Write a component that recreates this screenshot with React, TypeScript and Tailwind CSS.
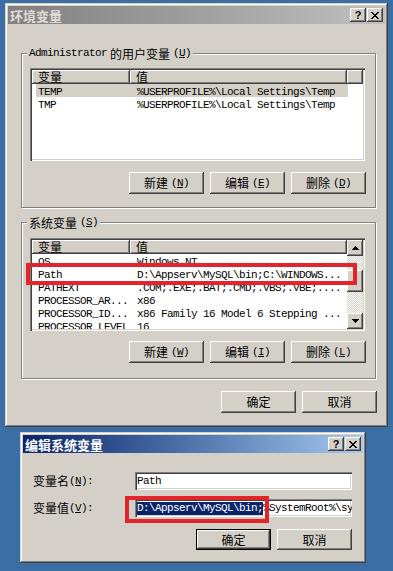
import React from "react";

// classic win2k look
const face = "bg-[#d4d0c8]";
const raised =
  "shadow-[inset_-1px_-1px_#404040,inset_1px_1px_#ffffff,inset_-2px_-2px_#808080,inset_2px_2px_#d4d0c8]";
const sunken =
  "shadow-[inset_1px_1px_#808080,inset_2px_2px_#404040,inset_-1px_-1px_#ffffff,inset_-2px_-2px_#d4d0c8]";
const frame =
  "shadow-[inset_-1px_-1px_#404040,inset_1px_1px_#d4d0c8,inset_-2px_-2px_#808080,inset_2px_2px_#ffffff]";

const A = ({ children }: { children: React.ReactNode }) => (
  <span className="font-['Liberation_Mono',monospace] text-[11px] tracking-[-0.6px]">{children}</span>
);

const Key = ({ k }: { k: string }) => (
  <A>
    (<span className="underline underline-offset-1">{k}</span>)
  </A>
);

const TitleBtns = () => (
  <div className="flex items-center gap-[1px]">
    <div className={`w-[16px] h-[14px] ${face} ${raised} flex items-center justify-center`}>
      <span className="font-['Liberation_Sans',sans-serif] font-bold text-[11px] text-black leading-none">?</span>
    </div>
    <div className={`w-[16px] h-[14px] ${face} ${raised} flex items-center justify-center`}>
      <svg width="8" height="7" viewBox="0 0 8 7" shapeRendering="crispEdges">
        <path
          d="M0 0h2v1H0zM6 0h2v1H6zM1 1h2v1H1zM5 1h2v1H5zM2 2h4v1H2zM3 3h2v1H3zM2 4h4v1H2zM1 5h2v1H1zM5 5h2v1H5zM0 6h2v1H0zM6 6h2v1H6z"
          fill="#000"
        />
      </svg>
    </div>
  </div>
);

const Btn = ({ children, def }: { children: React.ReactNode; def?: boolean }) => (
  <div
    className={`w-[75px] h-full ${face} ${raised} flex items-center justify-center gap-[3px] ${
      def ? "border border-black" : ""
    }`}
  >
    {children}
  </div>
);

function Group({
  label,
  className,
  children,
}: {
  label: React.ReactNode;
  className: string;
  children: React.ReactNode;
}) {
  return (
    <div
      className={`relative ml-[13px] w-[355px] border border-[#808080] shadow-[inset_1px_1px_#ffffff,1px_1px_#ffffff] ${className}`}
    >
      <div className="absolute left-[5px] -top-[8px] h-[15px] px-[2px] bg-[#d4d0c8] flex items-center gap-[3px] whitespace-nowrap">
        {label}
      </div>
      {children}
    </div>
  );
}

const Head = ({ w, children }: { w: string; children?: React.ReactNode }) => (
  <div className={`${w} h-[14px] ${face} ${raised} pl-[6px] flex items-center`}>
    {children && <span className="text-[12px] leading-[12px]">{children}</span>}
  </div>
);

const Row = ({ name, value, sel }: { name: string; value: string; sel?: boolean }) => (
  <div className={`ml-[4px] w-[312px] h-[13px] flex items-center whitespace-nowrap ${sel ? "bg-[#d4d0c8]" : ""}`}>
    <div className="w-[99px] pl-[2px] overflow-hidden">
      <A>{name}</A>
    </div>
    <div className="pl-[2px]">
      <A>{value}</A>
    </div>
  </div>
);

const Arrow = ({ down }: { down?: boolean }) => (
  <svg width="7" height="4" viewBox="0 0 7 4" shapeRendering="crispEdges">
    <path
      d={down ? "M0 0h7v1H0zM1 1h5v1H1zM2 2h3v1H2zM3 3h1v1H3z" : "M3 0h1v1H3zM2 1h3v1H2zM1 2h5v1H1zM0 3h7v1H0z"}
      fill="#000"
    />
  </svg>
);

const sysVars = [
  { name: "OS", value: "Windows_NT" },
  { name: "Path", value: "D:\\Appserv\\MySQL\\bin;C:\\WINDOWS..." },
  { name: "PATHEXT", value: ".COM;.EXE;.BAT;.CMD;.VBS;.VBE;...." },
  { name: "PROCESSOR_AR...", value: "x86" },
  { name: "PROCESSOR_ID...", value: "x86 Family 16 Model 6 Stepping ..." },
  { name: "PROCESSOR_LEVEL", value: "16" },
];

export default function App() {
  return (
    <div className="w-[393px] h-[571px] overflow-hidden bg-[#3a6ea5] flex flex-col font-['Noto_Sans_CJK_SC',sans-serif] text-[12px] text-black leading-none select-none">
      {/* 环境变量 */}
      <div className={`ml-[5px] mt-[3px] w-[383px] h-[424px] shrink-0 p-[3px] ${face} ${frame} flex flex-col`}>
        <div className="h-[18px] flex items-center justify-between pl-[2px] pr-[2px] bg-linear-to-r from-[#808080] to-[#c0c0c0]">
          <span className="font-bold text-[13px] text-[#e0ddd6]">环境变量</span>
          <TitleBtns />
        </div>

        <Group
          className="mt-[29px] h-[155px]"
          label={
            <>
              <A>Administrator</A>
              <span>的用户变量</span>
              <Key k="U" />
            </>
          }
        >
          <div className="pt-[14px] pl-[8px] pr-[9px] flex flex-col">
            <div className={`w-[335px] h-[93px] bg-white p-[2px] ${sunken} flex flex-col`}>
              <div className="flex h-[14px] shrink-0">
                <Head w="w-[98px]">变量</Head>
                <Head w="w-[217px]">值</Head>
                <Head w="flex-1" />
              </div>
              <Row name="TEMP" value="%USERPROFILE%\Local Settings\Temp" sel />
              <Row name="TMP" value="%USERPROFILE%\Local Settings\Temp" />
            </div>
            <div className="mt-[11px] h-[22px] flex justify-end gap-[6px]">
              <Btn>
                <span>新建</span>
                <Key k="N" />
              </Btn>
              <Btn>
                <span>编辑</span>
                <Key k="E" />
              </Btn>
              <Btn>
                <span>删除</span>
                <Key k="D" />
              </Btn>
            </div>
          </div>
        </Group>

        <Group
          className="mt-[14px] h-[157px]"
          label={
            <>
              <span>系统变量</span>
              <Key k="S" />
            </>
          }
        >
          <div className="pt-[15px] pl-[8px] pr-[9px] flex flex-col">
            <div className="relative">
              <div className={`w-[335px] h-[93px] bg-white p-[2px] ${sunken} flex`}>
                <div className="w-[315px] h-full flex flex-col">
                  <div className="flex h-[14px] shrink-0">
                    <Head w="w-[98px]">变量</Head>
                    <Head w="w-[217px]">值</Head>
                  </div>
                  <div className="flex-1 overflow-hidden">
                    {sysVars.map((v) => (
                      <Row key={v.name} name={v.name} value={v.value} />
                    ))}
                  </div>
                </div>
                <div className="w-[16px] h-full flex flex-col">
                  <div className={`h-[16px] ${face} ${raised} flex items-center justify-center`}>
                    <Arrow />
                  </div>
                  <div className="flex-1 pt-[14px] bg-[image:repeating-conic-gradient(#ffffff_0_25%,#d4d0c8_0_50%)] bg-[length:2px_2px]">
                    <div className={`h-[22px] ${face} ${raised}`} />
                  </div>
                  <div className={`h-[16px] ${face} ${raised} flex items-center justify-center`}>
                    <Arrow down />
                  </div>
                </div>
              </div>
              <div className="absolute -left-[4px] top-[25px] w-[331px] h-[22px] border-4 border-[#e3242b] pointer-events-none" />
            </div>
            <div className="mt-[10px] h-[22px] flex justify-end gap-[6px]">
              <Btn>
                <span>新建</span>
                <Key k="W" />
              </Btn>
              <Btn>
                <span>编辑</span>
                <Key k="I" />
              </Btn>
              <Btn>
                <span>删除</span>
                <Key k="L" />
              </Btn>
            </div>
          </div>
        </Group>

        <div className="mt-[12px] h-[22px] pr-[8px] flex justify-end gap-[6px]">
          <Btn>确定</Btn>
          <Btn>取消</Btn>
        </div>
      </div>

      {/* 编辑系统变量 */}
      <div className={`ml-[20px] mt-[5px] w-[346px] h-[131px] shrink-0 p-[3px] ${face} ${frame} flex flex-col`}>
        <div className="h-[18px] flex items-center justify-between pl-[2px] pr-[2px] bg-linear-to-r from-[#0a246a] to-[#a6caf0]">
          <span className="font-bold text-[13px] text-white">编辑系统变量</span>
          <TitleBtns />
        </div>
        <div className="pt-[19px] pl-[10px] pr-[11px] flex flex-col">
          <div className="h-[18px] flex items-center">
            <div className="w-[102px] flex items-center">
              <span>变量名</span>
              <Key k="N" />
              <A>:</A>
            </div>
            <div className={`w-[217px] h-full bg-white ${sunken} pl-[2px] flex items-center overflow-hidden whitespace-nowrap`}>
              <A>Path</A>
            </div>
          </div>
          <div className="mt-[9px] h-[18px] flex items-center">
            <div className="w-[102px] flex items-center">
              <span>变量值</span>
              <Key k="V" />
              <A>:</A>
            </div>
            <div className="relative w-[217px] h-full">
              <div className={`w-full h-full bg-white ${sunken} pl-[2px] flex items-center overflow-hidden whitespace-nowrap`}>
                <span className="h-[13px] inline-flex items-center bg-[#0a246a] text-white">
                  <A>D:\Appserv\MySQL\bin;</A>
                </span>
                <A>%SystemRoot%\system32;%SystemRoot%</A>
              </div>
              <div className="absolute -left-[10px] -top-[3px] w-[144px] h-[27px] border-4 border-[#e3242b] pointer-events-none" />
            </div>
          </div>
          <div className="mt-[12px] h-[21px] flex justify-end gap-[6px]">
            <Btn def>确定</Btn>
            <Btn>取消</Btn>
          </div>
        </div>
      </div>
    </div>
  );
}
